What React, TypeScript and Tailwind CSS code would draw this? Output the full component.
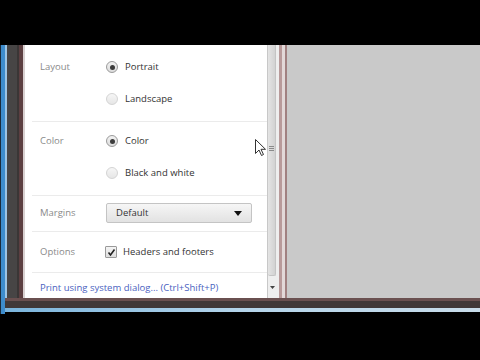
import React from "react";

const font = { fontFamily: '"Open Sans", "Noto Sans", sans-serif' };

const Radio = ({checked}: {checked?: boolean}) => (
  <span
    className={`flex h-[12px] w-[12px] items-center justify-center rounded-full border ${
      checked ? "border-[#9a9a9a] bg-gradient-to-b from-[#f2f2f2] to-[#dcdcdc]" : "border-[#d4d4d4] bg-gradient-to-b from-[#f6f6f6] to-[#e6e6e6]"
    }`}>
    {checked && <span className="h-[5px] w-[5px] rounded-full bg-[#3c3c3c]" />}
  </span>
);

const Option = ({label, checked}: {label: string; checked?: boolean}) => (
  <div className="flex h-[32px] items-center">
    <span className="ml-[81px]">
      <Radio checked={checked} />
    </span>
    <span className="ml-[7px] pt-[1px] text-[9.5px] text-[#333]">{label}</span>
  </div>
);

const Divider = () => <div className="ml-[7px] h-px bg-[#ebebeb]" />;

export default function App() {
  return (
    <div className="flex h-[360px] w-[480px] flex-col bg-black" style={font}>
      <div className="h-[45px]" />
      <div className="flex h-[253px]">
        {/* window frame on the left */}
        <div className="w-px bg-[#1a2a3a]" />
        <div className="w-[4px] bg-[#3d8ccc]" />
        <div className="w-[2px] bg-[#9cc4e4]" />
        <div className="w-[10px] bg-[#474545]" />
        <div className="w-[2px] bg-[#3a3636]" />
        <div className="w-[4px] bg-[#5c3f41]" />
        <div className="w-[2px] bg-[#d8d0d0]" />

        {/* settings panel */}
        <div className="relative flex w-[242px] flex-col bg-white">
          <div className="pb-[6px] pt-[6px]">
            <div className="flex h-[32px] items-center">
              <span className="ml-[15px] w-[66px] pt-[1px] text-[9.5px] text-[#8a8a8a]">Layout</span>
              <Radio checked />
              <span className="ml-[7px] pt-[1px] text-[9.5px] text-[#333]">Portrait</span>
            </div>
            <Option label="Landscape" />
          </div>
          <Divider />
          <div className="pb-[6px] pt-[3px]">
            <div className="flex h-[32px] items-center">
              <span className="ml-[15px] w-[66px] pt-[1px] text-[9.5px] text-[#8a8a8a]">Color</span>
              <Radio checked />
              <span className="ml-[7px] pt-[1px] text-[9.5px] text-[#333]">Color</span>
            </div>
            <Option label="Black and white" />
          </div>
          <Divider />
          <div className="pb-[8px] pt-[7px]">
            <div className="flex h-[20px] items-center">
              <span className="ml-[15px] w-[66px] pt-[1px] text-[9.5px] text-[#8a8a8a]">Margins</span>
              <div className="flex h-[20px] w-[146px] items-center justify-between rounded-[2px] border border-[#c4c4c4] bg-gradient-to-b from-[#f6f6f6] to-[#e2e2e2] px-[9px]">
                <span className="pt-[1px] text-[9.5px] text-[#333]">Default</span>
                <svg width="8" height="5" viewBox="0 0 8 5">
                  <path d="M0 0h8L4 5z" fill="#111" />
                </svg>
              </div>
            </div>
          </div>
          <Divider />
          <div className="pb-[10px] pt-[10px]">
            <div className="flex h-[20px] items-center">
              <span className="ml-[15px] w-[65px] pt-[1px] text-[9.5px] text-[#8a8a8a]">Options</span>
              <span className="flex h-[12px] w-[12px] items-center justify-center rounded-[1px] border border-[#9a9a9a] bg-gradient-to-b from-[#f4f4f4] to-[#dedede]">
                <svg width="9" height="9" viewBox="0 0 9 9">
                  <path d="M1.5 4.5l2 2.5L7.5 1.5" stroke="#222" strokeWidth="1.6" fill="none" />
                </svg>
              </span>
              <span className="ml-[6px] pt-[1px] text-[9.5px] text-[#333]">Headers and footers</span>
            </div>
          </div>
          <Divider />
          <div className="flex h-[24px] items-center pl-[15px] pt-[6px]">
            <span className="text-[9.5px] text-[#4a5fc0]">Print using system dialog... (Ctrl+Shift+P)</span>
          </div>

          {/* mouse cursor */}
          <svg className="absolute left-[230px] top-[94px]" width="11" height="17" viewBox="0 0 11 17">
            <path d="M0.5 0.5v14l3.5-3.5 2.5 5.5 2-1-2.5-5.2h4.5z" fill="#fff" stroke="#333" strokeWidth="1" />
          </svg>
        </div>

        {/* scrollbar */}
        <div className="flex w-[12px] flex-col border-l border-[#c8c8c8] bg-[#eeeeee]">
          <div className="flex h-[231px] w-[8px] flex-col rounded-b-[2px] border-r border-b border-[#c4c4c4] bg-gradient-to-r from-[#e4e4e4] to-[#d2d2d2]">
            <div className="h-[101px]" />
            <div className="flex flex-col gap-[1px] pl-[1px]">
              <div className="h-px w-[5px] bg-[#8a8a8a]" />
              <div className="h-px w-[5px] bg-[#8a8a8a]" />
              <div className="h-px w-[5px] bg-[#8a8a8a]" />
            </div>
          </div>
          <div className="flex h-[22px] items-center justify-center pr-[2px]">
            <svg width="5" height="3" viewBox="0 0 5 3">
              <path d="M0 0h5L2.5 3z" fill="#444" />
            </svg>
          </div>
        </div>
        <div className="w-[3px] bg-[#b89a9a]" />
        <div className="w-[3px] bg-[#e2d8d8]" />
        <div className="w-[2px] bg-[#a08080]" />
        <div className="flex-1 bg-[#c9c9c9]" />
      </div>

      {/* bottom edge of the window */}
      <div className="flex h-[16px]">
        <div className="w-px bg-[#1a2a3a]" />
        <div className="w-[4px] bg-[#3d8ccc]" />
        <div className="flex flex-1 flex-col">
          <div className="h-[3px] bg-[#6a5050]" />
          <div className="h-[7px] bg-[#403838]" />
          <div className="h-[4px] bg-gradient-to-r from-[#7ab4dc] via-[#b4d4ea] to-[#c8dcea]" />
          <div className="h-[2px] bg-black" />
        </div>
      </div>
    </div>
  );
}
